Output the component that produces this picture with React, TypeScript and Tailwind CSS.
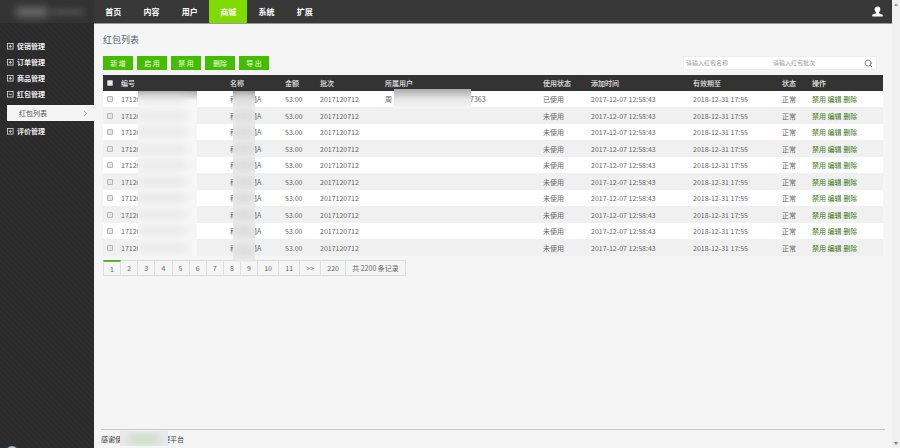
import { useState } from "react";
import { ChevronRight, Search } from "lucide-react";

const navItems = ["首页", "内容", "用户", "商城", "系统", "扩展"];

const menuItems = [
  { label: "促销管理" },
  { label: "订单管理" },
  { label: "商品管理" },
  { label: "红包管理", children: ["红包列表"] },
  { label: "评价管理" },
];

const actions = ["新 增", "启 用", "禁 用", "删除", "导 出"];

const columns = [
  { title: "编号", width: "w-[109px]" },
  { title: "名称", width: "w-[55px]" },
  { title: "金额", width: "w-[35px]" },
  { title: "批次", width: "w-[65px]" },
  { title: "所属用户", width: "" },
  { title: "使用状态", width: "w-[48px]" },
  { title: "添加时间", width: "w-[102px]" },
  { title: "有效期至", width: "w-[89px]" },
  { title: "状态", width: "w-[30px]" },
  { title: "操作", width: "w-[71px]" },
];

const rows = Array.from({ length: 10 }, (_, i) => ({
  id: i,
  amount: "53.00",
  batch: "2017120712",
  used: i === 0,
  createdAt: "2017-12-07 12:58:43",
  expiresAt: "2018-12-31 17:55",
}));

const pages = ["1", "2", "3", "4", "5", "6", "7", "8", "9", "10", "11", ">>", "220"];

const ToggleIcon = ({ open }: { open: boolean }) => (
  <svg viewBox="0 0 7 7" className="size-[7px] shrink-0" fill="none" stroke="#e2e2e2">
    <rect x="0.5" y="0.5" width="5.6" height="5.6" strokeWidth="0.8" />
    <path d={open ? "M1.8 3.3h3" : "M1.8 3.3h3M3.3 1.8v3"} strokeWidth="0.9" />
  </svg>
);

const UserIcon = () => (
  <svg viewBox="0 0 20 20" className="h-[11px] w-[11px]" fill="#fff">
    <path d="M10 0.8c3.300 0 5.200 2.100 5.200 5.200 0 2.300-1 4.200-2.400 5.200v1.300c0 .6.4.9 1.200 1.200l3.600 1.300c1.500.6 2 1.400 2 2.600V19H.4v-1.400c0-1.200.5-2 2-2.600l3.600-1.300c.8-.3 1.200-.6 1.200-1.200v-1.300C5.800 10.200 4.800 8.300 4.800 6c0-3.100 1.900-5.200 5.200-5.200z" />
  </svg>
);

const Sidebar = () => (
  <aside className="flex w-[94px] shrink-0 flex-col overflow-hidden bg-[repeating-linear-gradient(45deg,#2d2d2d_0_2px,#2a2a2a_2px_4px)]">
    <div className="flex h-[23px] items-center gap-1 bg-[#333] pl-4">
      <span className="h-2 w-8 bg-[#777] blur-[4px]" />
      <span className="h-1 w-8 bg-[#5c5c5c] blur-[3px]" />
    </div>
    <nav className="mt-[15px] flex-1 text-[7px]">
      {menuItems.map((item) => (
        <div key={item.label}>
          <a href="#" className="flex h-4 items-center gap-[3px] pl-[7px] font-bold text-[#eee]">
            <ToggleIcon open={!!item.children} />
            {item.label}
          </a>
          {item.children?.map((child) => (
            <a
              key={child}
              href="#"
              className="mt-[3px] mb-[2px] ml-[7px] flex h-4 items-center justify-between bg-[#f5f5f5] pr-1 pl-3 text-[#555]"
            >
              {child}
              <ChevronRight size={9} strokeWidth={2} color="#888" />
            </a>
          ))}
        </div>
      ))}
    </nav>
    <div className="relative h-[2px]">
      <span className="absolute top-0 left-[6px] size-3 rounded-full bg-[#9fc0d8]" />
    </div>
  </aside>
);

export default function App() {
  const [selected, setSelected] = useState<number[]>([]);

  const toggleRow = (id: number) => {
    setSelected((prev) => (prev.includes(id) ? prev.filter((x) => x !== id) : [...prev, id]));
  };

  const toggleAll = () => {
    setSelected(selected.length === rows.length ? [] : rows.map((r) => r.id));
  };

  const checkbox =
    "block size-[6px] appearance-none rounded-[1px] border border-[#b5b5b5] bg-[#e6e6e6] checked:bg-[#44bd00]";

  return (
    <div className="flex min-h-screen bg-[#f5f5f5] font-['Noto_Sans_CJK_SC',sans-serif] text-[7px] leading-[10px] text-[#666]">
      <Sidebar />

      <div className="flex min-w-0 flex-1 flex-col">
        <header className="flex h-6 items-stretch justify-between border-b border-[#999] bg-[#383838] pr-[9px]">
          <nav className="grid w-[230px] grid-cols-6 text-[8px] font-bold text-white">
            {navItems.map((item) => (
              <a
                key={item}
                href="#"
                className={`flex items-center justify-center ${item === "商城" ? "bg-[#80dc00]" : ""}`}
              >
                {item}
              </a>
            ))}
          </nav>
          <button type="button" aria-label="用户" className="flex items-center">
            <UserIcon />
          </button>
        </header>

        <main className="flex-1 px-[9px] pt-[10px]">
          <h1 className="text-[9px] leading-3 text-[#53636b]">红包列表</h1>

          <div className="mt-[10px] flex items-center justify-between pr-[6px]">
            <div className="flex gap-1">
              {actions.map((label) => (
                <button key={label} type="button" className="h-[14px] min-w-[30px] bg-[#44bd00] px-[7px] text-[#f2ffe8]">
                  {label}
                </button>
              ))}
            </div>
            <form className="flex h-[14px] w-[194px] items-center border border-[#eee] bg-white px-[2px] text-[6px]">
              <input
                type="text"
                aria-label="红包名称"
                placeholder="请输入红包名称"
                className="w-[87px] outline-none placeholder:text-[#999]"
              />
              <input
                type="text"
                aria-label="红包批次"
                placeholder="请输入红包批次"
                className="w-[87px] outline-none placeholder:text-[#999]"
              />
              <button type="button" aria-label="搜索" className="ml-1">
                <Search size={9} strokeWidth={2} color="#555" />
              </button>
            </form>
          </div>

          <table className="mt-[5px] w-full table-fixed border-collapse text-left">
            <thead>
              <tr className="h-4 bg-[#333] text-[#e6e6e6]">
                <th className="w-[18px] p-0 pl-1">
                  <input
                    type="checkbox"
                    aria-label="全选"
                    className={checkbox}
                    checked={selected.length === rows.length}
                    onChange={toggleAll}
                  />
                </th>
                {columns.map((col) => (
                  <th key={col.title} className={`p-0 font-medium ${col.width}`}>
                    {col.title}
                  </th>
                ))}
              </tr>
            </thead>
            <tbody>
              {rows.map((row) => (
                <tr key={row.id} className="h-4 bg-white even:h-[17px] even:bg-[#f0f0f0]">
                  <td className="p-0 pl-1">
                    <input
                      type="checkbox"
                      aria-label={`选择第${row.id + 1}行`}
                      className={checkbox}
                      checked={selected.includes(row.id)}
                      onChange={() => toggleRow(row.id)}
                    />
                  </td>
                  <td className="relative p-0">
                    17120
                    <span
                      className={`absolute inset-y-0 left-[17px] flex w-[59px] items-center overflow-hidden ${
                        row.id === 0 ? "bg-linear-to-b from-[#aaa] to-[#f7f7f7] to-60%" : "bg-[#f6f6f6]"
                      }`}
                    >
                      <span className="h-[6px] w-12 bg-[#e2e2e2] blur-[4px]" />
                    </span>
                  </td>
                  <td className="relative p-0">
                    科
                    <span className="ml-[13px]">题A</span>
                    <span
                      className={`absolute top-0 left-[3px] flex w-[22px] items-center overflow-hidden ${
                        row.id === 9 ? "-bottom-[6px]" : "bottom-0"
                      } ${row.id === 0 ? "bg-linear-to-b from-[#999] to-[#ebebeb] to-60%" : "bg-[#ebebeb]"}`}
                    >
                      <span className="h-2 w-full bg-[#d6d6d6] blur-[4px]" />
                    </span>
                  </td>
                  <td className="p-0">{row.amount}</td>
                  <td className="p-0">{row.batch}</td>
                  <td className="relative p-0">
                    {row.used && (
                      <>
                        周
                        <span className="ml-[78px]">7363</span>
                        <span className="absolute -top-[2px] left-[9px] h-5 w-[77px] bg-linear-to-b from-[#aaa] via-[#e6e6e6] to-[#f5f5f5]" />
                      </>
                    )}
                  </td>
                  <td className="p-0">{row.used ? "已使用" : "未使用"}</td>
                  <td className="p-0">{row.createdAt}</td>
                  <td className="p-0">{row.expiresAt}</td>
                  <td className="p-0">正常</td>
                  <td className="p-0 whitespace-nowrap text-[#38780f]">
                    <a href="#">禁用</a> <a href="#">编辑</a> <a href="#">删除</a>
                  </td>
                </tr>
              ))}
            </tbody>
          </table>

          <nav className="mt-1 flex h-4 w-[303px] border-b border-[#ddd]">
            {pages.map((page) => (
              <a
                key={page}
                href="#"
                className={`flex flex-auto items-center justify-center border-r border-[#ddd] px-[6px] ${
                  page === "1" ? "border-t-2 border-l border-t-[#5cb531]" : "border-t"
                }`}
              >
                {page}
              </a>
            ))}
            <span className="flex flex-auto items-center justify-center border-t border-r border-[#ddd] px-[6px] whitespace-nowrap">
              共 2200 条记录
            </span>
          </nav>
        </main>

        <footer className="mr-[7px] ml-[7px] h-[19px] border-t border-[#c4c8c4] pt-1 text-[#444]">
          <div className="relative">
            感谢使
            <span className="ml-[41px]">理平台</span>
            <span className="absolute -top-[3px] left-[19px] flex h-[15px] w-12 items-center justify-center overflow-hidden bg-[#e8e8e8]">
              <span className="h-[6px] w-7 bg-[#bdd6b0] blur-[4px]" />
            </span>
          </div>
        </footer>
      </div>

      <div className="flex w-2 shrink-0 flex-col items-center justify-between bg-[#f0f0f0] py-[3px]">
        <svg viewBox="0 0 4 3" className="h-[3px] w-1" fill="#999">
          <path d="M2 0l2 3H0z" />
        </svg>
        <svg viewBox="0 0 4 3" className="h-[3px] w-1" fill="#777">
          <path d="M0 0h4L2 3z" />
        </svg>
      </div>
    </div>
  );
}
